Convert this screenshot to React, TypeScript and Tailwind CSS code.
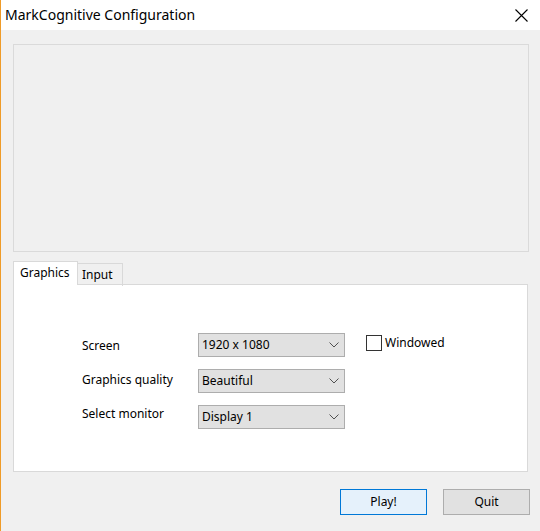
import React from "react";

const font = { fontFamily: '"Segoe UI", "Noto Sans", sans-serif' };

function Chevron() {
  return (
    <svg width="10" height="6" viewBox="0 0 10 6" className="shrink-0">
      <path d="M0.5 0.5 L5 5 L9.5 0.5" fill="none" stroke="#505050" strokeWidth="1" />
    </svg>
  );
}

function Combo({ value }: { value: string }) {
  return (
    <div className="w-[147px] h-[24px] bg-[#e1e1e1] border border-[#adadad] flex items-center justify-between pl-[3px] pr-[5px] text-[12px] text-black">
      <span>{value}</span>
      <Chevron />
    </div>
  );
}

export default function App() {
  return (
    <div
      className="w-[540px] h-[531px] flex flex-col border-l border-[#ef9b28] bg-[#f0f0f0] overflow-hidden"
      style={font}
    >
      <div className="h-[30px] bg-white flex items-center justify-between shrink-0">
        <span className="pl-[4px] text-[14px] text-black leading-none">MarkCognitive Configuration</span>
        <svg width="13" height="13" viewBox="0 0 13 13" className="mr-[12px]">
          <path d="M0.5 0.5 L12.5 12.5 M12.5 0.5 L0.5 12.5" stroke="#000" strokeWidth="1.1" />
        </svg>
      </div>
      <div className="flex-1 flex flex-col pl-[12px] pt-[14px]">
        <div className="w-[516px] h-[208px] border border-[#dadada]" />
        <div className="mt-[9px] flex items-end h-[24px] relative z-10">
          <div className="w-[65px] h-[24px] bg-white border border-b-0 border-[#d9d9d9] text-[12px] flex items-start pt-[2px] pl-[6px]">
            Graphics
          </div>
          <div className="w-[45px] border border-l-0 border-b-0 border-[#d9d9d9] text-[12px] flex items-start pt-[2px] pl-[4px] mb-[-1px] h-[23px]">
            Input
          </div>
        </div>
        <div className="w-[515px] h-[188px] bg-white border border-[#d9d9d9] mt-[-1px] pl-[68px] pt-[48px] flex flex-col gap-[12px] text-[12px] text-black">
          <div className="flex items-center h-[24px]">
            <span className="w-[116px] mt-[1px]">Screen</span>
            <Combo value="1920 x 1080" />
            <div className="ml-[21px] flex items-center mt-[-4px]">
              <div className="w-[16px] h-[16px] border border-[#333] bg-white" />
              <span className="ml-[3px]">Windowed</span>
            </div>
          </div>
          <div className="flex items-center h-[24px]">
            <span className="w-[116px] mt-[-3px]">Graphics quality</span>
            <Combo value="Beautiful" />
          </div>
          <div className="flex items-center h-[24px]">
            <span className="w-[116px] mt-[-7px]">Select monitor</span>
            <Combo value="Display 1" />
          </div>
        </div>
        <div className="flex justify-end gap-[16px] mt-[17px] pr-[10px]">
          <div className="w-[87px] h-[26px] bg-[#e5f1fb] border border-[#0078d7] flex items-center justify-center text-[12px] text-black">
            Play!
          </div>
          <div className="w-[87px] h-[26px] bg-[#e1e1e1] border border-[#adadad] flex items-center justify-center text-[12px] text-black">
            Quit
          </div>
        </div>
      </div>
    </div>
  );
}
